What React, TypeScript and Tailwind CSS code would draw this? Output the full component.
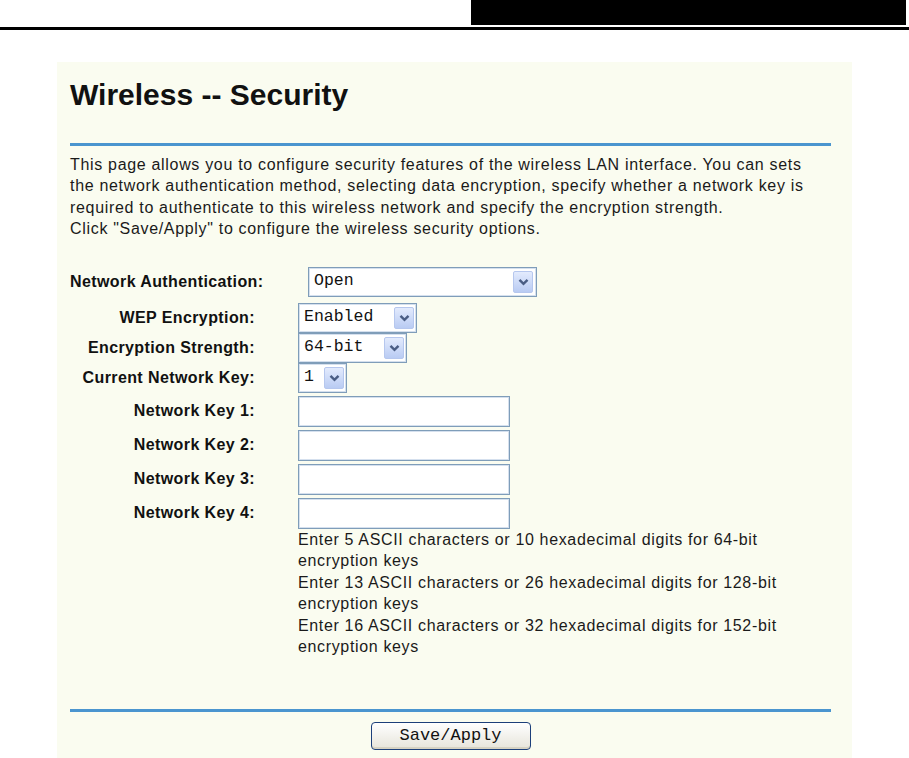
import React from "react";

const sans = "font-['Liberation_Sans',Arial,sans-serif]";
const mono = "font-['Liberation_Mono','Courier_New',monospace]";

function Chevron() {
  return (
    <svg width="11" height="8" viewBox="0 0 11 8">
      <path d="M1.5 1.8 L5.5 5.8 L9.5 1.8" fill="none" stroke="#4a5d84" strokeWidth="2.4" />
    </svg>
  );
}

function XpSelect({ value, width, inset = 3 }: { value: string; width: string; inset?: number }) {
  return (
    <div
      className={`${width} h-[30px] flex items-center justify-between bg-white border border-[#7f9db9] shadow-[inset_0_0_0_1px_#d5e0ee] ${
        inset === 4 ? "pr-[3px]" : "pr-[2px]"
      }`}
    >
      <span className={`${mono} text-[16.5px] text-[#111] pl-[5px] leading-none`}>{value}</span>
      <div className="w-[20px] h-[22px] flex items-center justify-center rounded-[2px] border border-[#b6c7ee] bg-gradient-to-b from-[#e3ebfd] to-[#b9cbf3]">
        <Chevron />
      </div>
    </div>
  );
}

function XpInput() {
  return (
    <input
      type="text"
      className="w-[212px] h-[31px] bg-white border border-[#7f9db9] shadow-[inset_0_0_0_1px_#d5e0ee] outline-none"
    />
  );
}

function Label({ children }: { children: React.ReactNode }) {
  return (
    <div className="w-[185px] text-right font-bold text-[16px] tracking-[0.4px] text-[#111] leading-none whitespace-nowrap">
      {children}
    </div>
  );
}

export default function App() {
  return (
    <div className={`${sans} bg-white min-h-[758px] w-[909px] overflow-hidden`}>
      {/* page header of the manual */}
      <div className="h-[25px] flex">
        <div className="ml-[471px] w-[435px] bg-black" />
      </div>
      <div className="h-[3px] mt-[2px] bg-black" />

      <div className="mt-[32px] ml-[57px] w-[795px] h-[700px] bg-[#fafcf0] pt-[15px] pl-[13px] pr-[21px]">
        <h1 className="text-[30px] leading-[36px] font-bold text-[#111]">Wireless -- Security</h1>

        <div className="mt-[30px] h-[3px] bg-[#4a95cf]" />

        <p className="mt-[8px] text-[16px] leading-[21.4px] tracking-[0.68px] text-[#1a1a1a] whitespace-nowrap">
          This page allows you to configure security features of the wireless LAN interface. You can sets
          <br />
          the network authentication method, selecting data encryption, specify whether a network key is
          <br />
          required to authenticate to this wireless network and specify the encryption strength.
          <br />
          Click "Save/Apply" to configure the wireless security options.
        </p>

        {/* Network Authentication */}
        <div className="mt-[27px] flex items-center">
          <div className="w-[238px] font-bold text-[16px] tracking-[0.4px] text-[#111] leading-none">
            Network Authentication:
          </div>
          <XpSelect value="Open" width="w-[229px]" inset={4} />
        </div>

        {/* WEP settings */}
        <div className="mt-[6px] flex flex-col">
          <div className="flex items-center gap-[43px]">
            <Label>WEP Encryption:</Label>
            <XpSelect value="Enabled" width="w-[119px]" />
          </div>
          <div className="flex items-center gap-[43px]">
            <Label>Encryption Strength:</Label>
            <XpSelect value="64-bit" width="w-[109px]" />
          </div>
          <div className="flex items-center gap-[43px]">
            <Label>Current Network Key:</Label>
            <XpSelect value="1" width="w-[49px]" />
          </div>

          <div className="mt-[3px] flex flex-col gap-[3px]">
            {[1, 2, 3, 4].map((n) => (
              <div key={n} className="flex items-center gap-[43px]">
                <Label>Network Key {n}:</Label>
                <XpInput />
              </div>
            ))}
          </div>

          <div className="ml-[228px] text-[16px] leading-[21.5px] tracking-[0.65px] text-[#1a1a1a] whitespace-nowrap">
            <div>Enter 5 ASCII characters or 10 hexadecimal digits for 64-bit</div>
            <div>encryption keys</div>
            <div>Enter 13 ASCII characters or 26 hexadecimal digits for 128-bit</div>
            <div>encryption keys</div>
            <div>Enter 16 ASCII characters or 32 hexadecimal digits for 152-bit</div>
            <div>encryption keys</div>
          </div>
        </div>

        <div className="mt-[51px] h-[3px] bg-[#4a95cf]" />

        <div className="mt-[10px] flex justify-center">
          <button
            className={`${mono} w-[160px] h-[28px] text-[17px] text-[#111] rounded-[4px] border border-[#1c3f7a] bg-gradient-to-b from-white to-[#e6e4da] shadow-[inset_0_-2px_0_#d6d2c2]`}
          >
            Save/Apply
          </button>
        </div>
      </div>
    </div>
  );
}
